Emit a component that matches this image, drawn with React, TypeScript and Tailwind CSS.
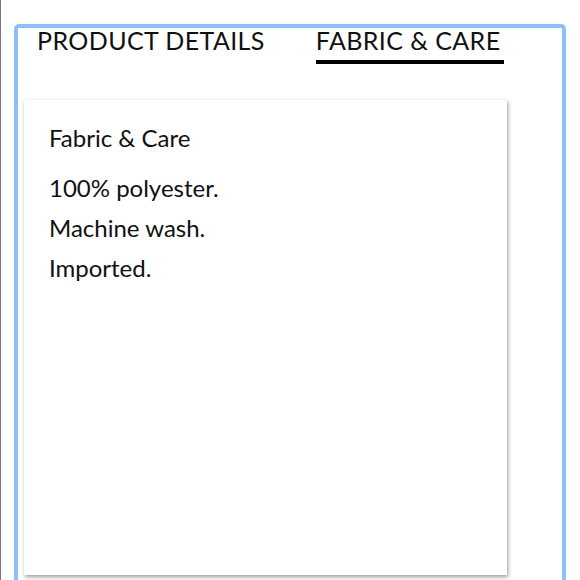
export default function App() {
  const tabFont = { fontFamily: 'Lato, "Noto Sans", sans-serif' };
  return (
    <div className="h-[580px] w-[580px] overflow-hidden bg-white" style={tabFont}>
      <div className="h-full border-l border-[#7a7a7a] pl-[13px] pt-[24px]">
        <div className="h-[600px] w-[552px] rounded-t-[5px] border-[4px] border-b-0 border-[#8ec0f5]">
          <div className="-mt-[1px] flex gap-[51px] pl-[19px]">
            <div className="text-[25px] leading-[26px] tracking-[0.4px] text-[#111]">PRODUCT DETAILS</div>
            <div className="flex flex-col">
              <div className="text-[25px] leading-[26px] tracking-[0.4px] text-[#111]">FABRIC &amp; CARE</div>
              <div className="mt-[7px] h-[4px] w-[188px] bg-black" />
            </div>
          </div>
          <div className="ml-[6px] mt-[36px] h-[475px] w-[483px] bg-white px-[25px] pt-[22px] shadow-[1px_2px_4px_rgba(0,0,0,0.4)]">
            <div className="text-[24px] leading-[32px] text-[#111]">Fabric &amp; Care</div>
            <div className="mt-[14px] flex flex-col text-[24px] leading-[40px] text-[#111]">
              <span>100% polyester.</span>
              <span>Machine wash.</span>
              <span>Imported.</span>
            </div>
          </div>
        </div>
      </div>
    </div>
  );
}
